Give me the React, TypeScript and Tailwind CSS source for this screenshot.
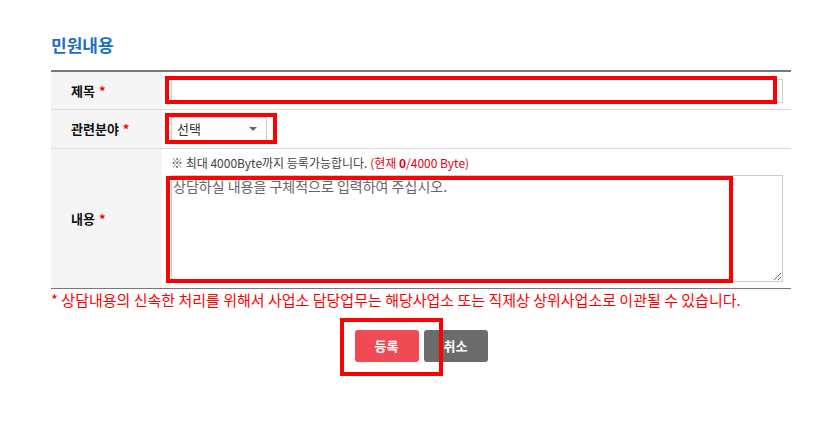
const font = { fontFamily: '"Noto Sans CJK KR", "Noto Sans", sans-serif' };

const Mark = ({ className }: { className: string }) => (
  <span className={`pointer-events-none absolute border-4 border-[#ff0000] ${className}`}></span>
);

const Label = ({ children }: { children: string }) => (
  <div className="w-[111px] shrink-0 bg-[#f5f5f5] pl-[20px] flex items-center text-[13px] font-bold text-[#111]">
    {children}
    <span className="ml-[4px] text-[#ff0000]">*</span>
  </div>
);

export default function App() {
  return (
    <div className="min-h-[422px] bg-white" style={font}>
      <div className="w-[740px] ml-[51px] pt-[34px]">
        <h2 className="text-[17px] leading-[22px] font-bold text-[#1a6fc5] mb-[14px]">민원내용</h2>

        <div className="border-t-2 border-b border-t-[#777] border-b-[#777]">
          <div className="flex h-[38px] border-b border-[#ddd]">
            <Label>제목</Label>
            <div className="flex-1 flex items-center pl-[9px] pr-[8px]">
              <div className="relative w-full">
                <input type="text" className="block w-full h-[24px] border border-[#ccc] bg-white outline-none" />
                <Mark className="-left-[6px] -top-[3px] right-[6px] -bottom-[1px]" />
              </div>
            </div>
          </div>

          <div className="flex h-[39px] border-b border-[#ddd]">
            <Label>관련분야</Label>
            <div className="flex-1 flex items-center pl-[9px]">
              <div className="relative">
                <div className="w-[96px] h-[25px] border border-[#ccc] bg-white flex items-center justify-between pl-[5px] pr-[9px] text-[13px] text-[#333]">
                  <span>선택</span>
                  <svg width="8" height="4" viewBox="0 0 8 4">
                    <path d="M0 0 L8 0 L4 4 Z" fill="#666" />
                  </svg>
                </div>
                <Mark className="-left-[6px] -top-[4px] -right-[10px] -bottom-[2px]" />
              </div>
            </div>
          </div>

          <div className="flex h-[139px]">
            <Label>내용</Label>
            <div className="flex-1 pl-[9px] pr-[8px] pt-[5px]">
              <p className="text-[12px] leading-[18px] text-[#444]">
                ※ 최대 4000Byte까지 등록가능합니다.{" "}
                <span className="text-[#e60012]">
                  (현재 <b>0</b>/4000 Byte)
                </span>
              </p>
              <div className="relative mt-[3px]">
                <textarea
                  className="block w-full h-[107px] border border-[#ccc] px-[1px] py-[1px] text-[14px] leading-[18px] text-[#555] placeholder:text-[#666] outline-none"
                  placeholder="상담하실 내용을 구체적으로 입력하여 주십시오."
                ></textarea>
                <Mark className="-left-[5px] top-[1px] right-[50px] -bottom-[1px]" />
              </div>
            </div>
          </div>
        </div>

        <p className="mt-[1px] text-[15px] leading-[20px] text-[#ff0000]">
          * 상담내용의 신속한 처리를 위해서 사업소 담당업무는 해당사업소 또는 직제상 상위사업소로 이관될 수 있습니다.
        </p>

        <div className="mt-[20px] flex justify-center gap-[5px]">
          <div className="relative">
            <button className="w-[64px] h-[32px] rounded-[3px] bg-[#f04b55] text-white text-[13px] font-bold">등록</button>
            <Mark className="-left-[15px] -top-[12px] -right-[24px] -bottom-[14px]" />
          </div>
          <button className="w-[64px] h-[32px] rounded-[3px] bg-[#6b6b6b] text-white text-[13px] font-bold">취소</button>
        </div>
      </div>
    </div>
  );
}
